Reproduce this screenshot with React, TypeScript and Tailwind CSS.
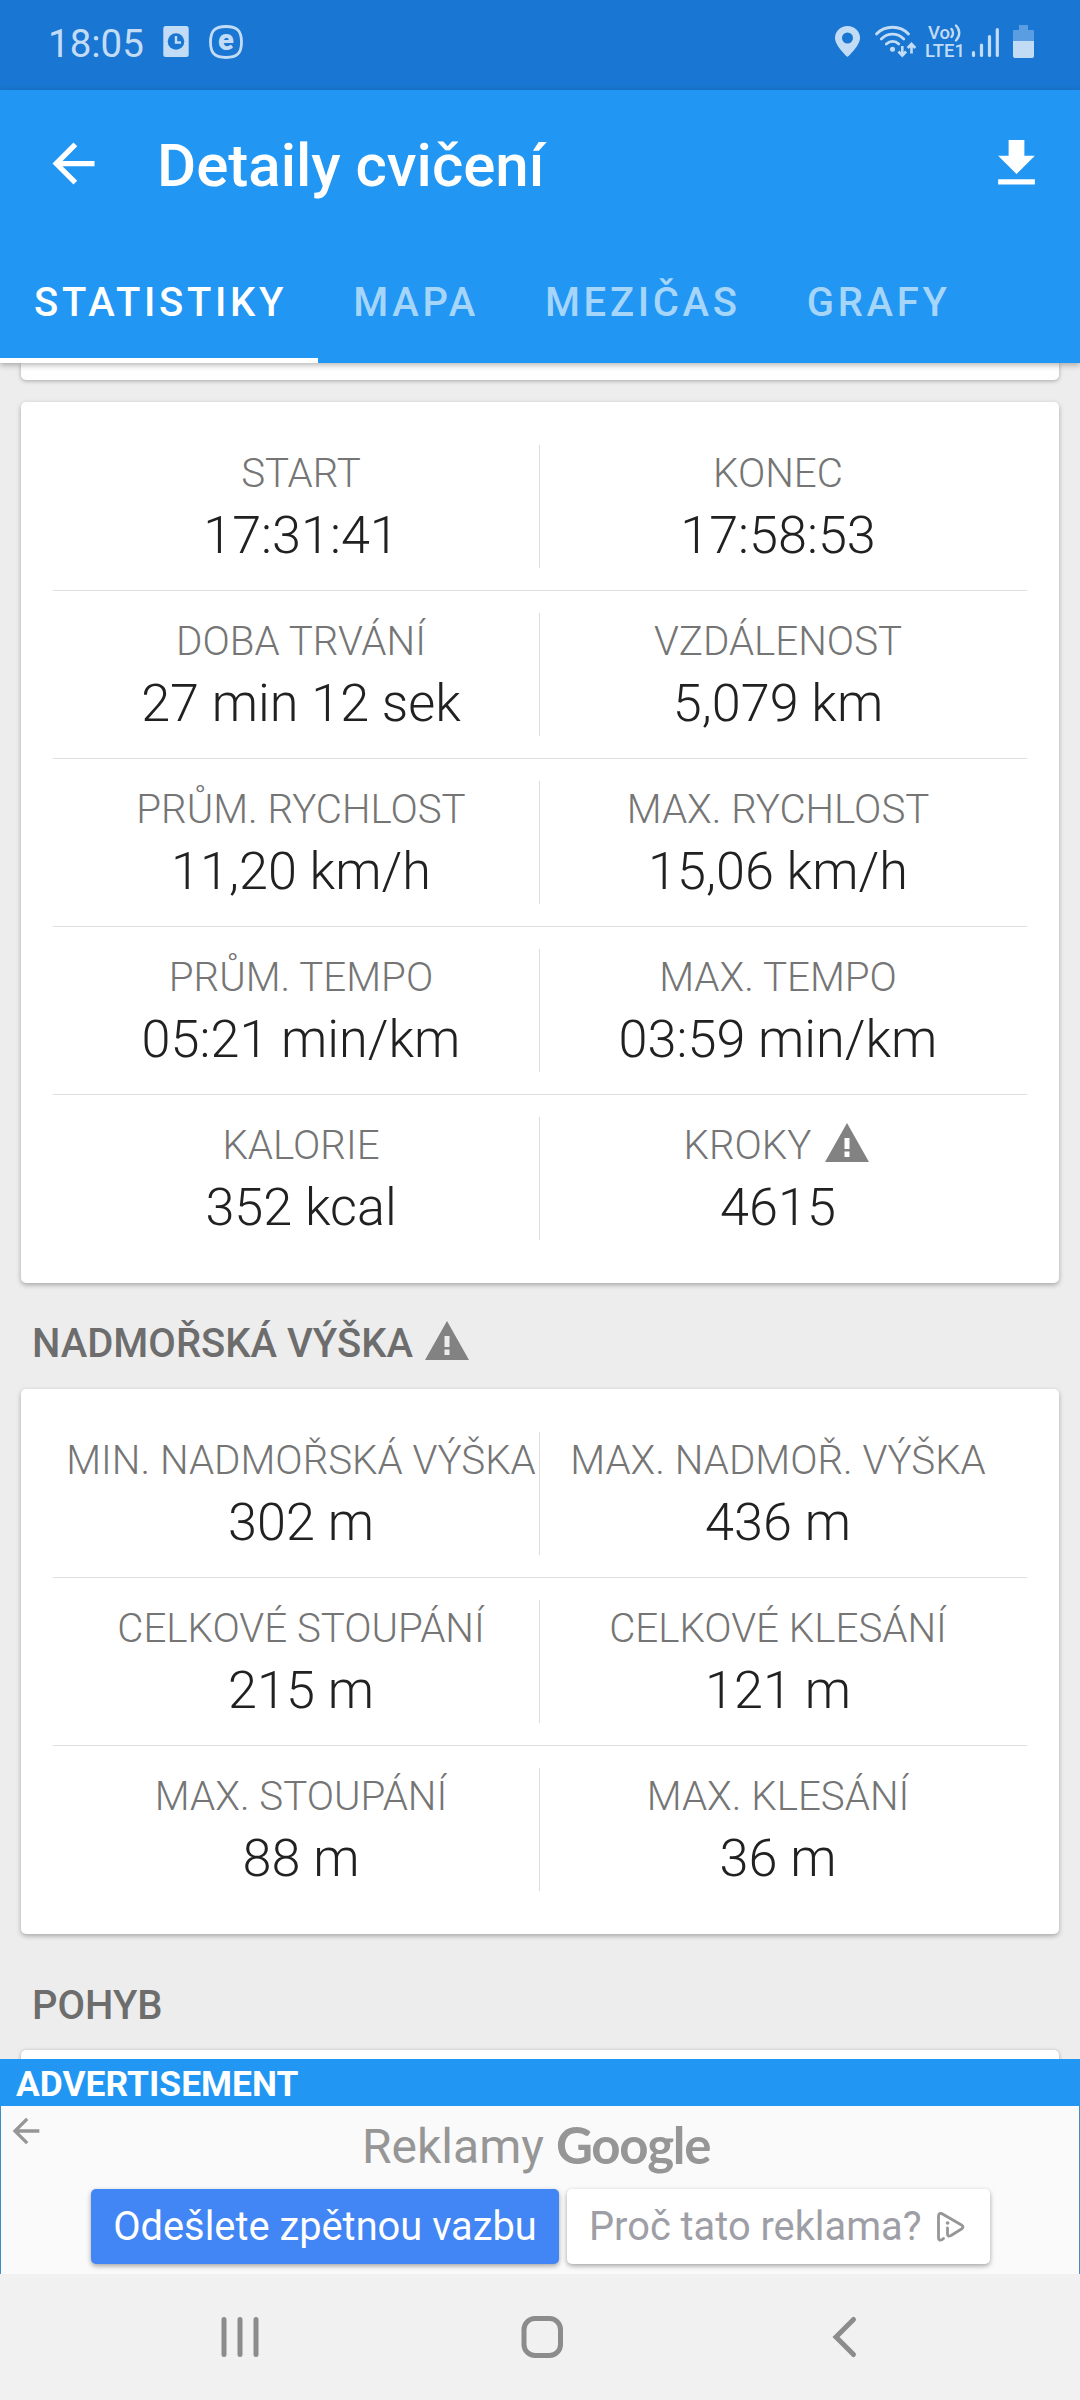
import { MdArrowBack, MdFileDownload } from "react-icons/md";

interface Stat {
  label: string;
  value: string;
  warning?: boolean;
}

interface StatCardProps {
  rows: Stat[][];
}

const tabs = ["STATISTIKY", "MAPA", "MEZIČAS", "GRAFY"];

const mainStats: Stat[][] = [
  [
    { label: "START", value: "17:31:41" },
    { label: "KONEC", value: "17:58:53" },
  ],
  [
    { label: "DOBA TRVÁNÍ", value: "27 min 12 sek" },
    { label: "VZDÁLENOST", value: "5,079 km" },
  ],
  [
    { label: "PRŮM. RYCHLOST", value: "11,20 km/h" },
    { label: "MAX. RYCHLOST", value: "15,06 km/h" },
  ],
  [
    { label: "PRŮM. TEMPO", value: "05:21 min/km" },
    { label: "MAX. TEMPO", value: "03:59 min/km" },
  ],
  [
    { label: "KALORIE", value: "352 kcal" },
    { label: "KROKY", value: "4615", warning: true },
  ],
];

const altitudeStats: Stat[][] = [
  [
    { label: "MIN. NADMOŘSKÁ VÝŠKA", value: "302 m" },
    { label: "MAX. NADMOŘ. VÝŠKA", value: "436 m" },
  ],
  [
    { label: "CELKOVÉ STOUPÁNÍ", value: "215 m" },
    { label: "CELKOVÉ KLESÁNÍ", value: "121 m" },
  ],
  [
    { label: "MAX. STOUPÁNÍ", value: "88 m" },
    { label: "MAX. KLESÁNÍ", value: "36 m" },
  ],
];

const WarningIcon = () => (
  <svg width="44" height="39" viewBox="0 0 44 39" className="shrink-0 mb-2 mr-[3px]">
    <path
      fill="#828282"
      fillRule="evenodd"
      d="M22 0 44 39H0ZM19.5 15v11h5V15ZM19.5 28.5v5.5h5v-5.5Z"
    />
  </svg>
);

const StatusBar = () => (
  <div className="h-[90px] shrink-0 bg-[#1976d2] text-[#c3dcf5] flex items-center justify-between pl-12 pr-[46px] pb-1.5">
    <div className="flex items-center">
      <span className="text-[38.500px] w-[115px] pt-[3px]">18:05</span>
      <svg width="82" height="36" viewBox="0 0 82 36" fill="none">
        <rect x="0.300" y="2" width="25.400" height="31" rx="2.500" fill="#c3dcf5" />
        <circle cx="13" cy="17.500" r="8.300" fill="#1976d2" />
        <path d="M13 12v6.500h5" stroke="#c3dcf5" strokeWidth="2.400" />
        <path
          d="M63 2.500c11 0 15.500 4 15.500 15.500S74 33.500 63 33.500 47.500 29.500 47.500 18 52 2.500 63 2.500Z"
          stroke="#c3dcf5"
          strokeWidth="2.800"
        />
        <text
          x="63"
          y="26"
          textAnchor="middle"
          fontSize="29"
          fontWeight="900"
          fill="#c3dcf5"
          className="font-['Roboto',sans-serif]"
        >
          e
        </text>
      </svg>
    </div>

    <div className="flex items-center h-9">
      {/* Location + wifi */}
      <svg width="90" height="36" viewBox="0 0 90 36" fill="none" stroke="#c3dcf5">
        <path
          fill="#c3dcf5"
          stroke="none"
          fillRule="evenodd"
          d="M12.500 2C5.500 2 0 7 0 14c0 8 12.500 19 12.500 19S25 22 25 14C25 7 19.500 2 12.500 2Zm0 6.500a5.500 5.500 0 1 1 0 11 5.500 5.500 0 0 1 0-11Z"
        />
        <path
          strokeWidth="2.800"
          strokeLinecap="round"
          d="M41.500 10C50 1 65 1 73.500 10M46.300 15c6.500-6.500 16-6.500 22.500 0M51.300 20c3.800-3.500 9-3.500 12.500 0"
        />
        <circle cx="57.500" cy="25.300" r="2.500" fill="#c3dcf5" stroke="none" />
        <path strokeWidth="2.600" d="M67.300 22v9.500M63.500 27.500l3.800 4 3.800-4M76.500 29.500V20M72.700 24l3.800-4 3.800 4" />
      </svg>
      <div className="w-[43px] text-[18.500px] font-medium leading-[18px] whitespace-nowrap">
        <div className="flex items-center pl-[3px]">
          Vo
          <svg width="12" height="18" viewBox="0 0 12 18" fill="none" stroke="#c3dcf5" strokeWidth="2.400" strokeLinecap="round">
            <path d="M1.500 5c2 2.200 2 5.800 0 8M6 1.500c4.300 4.500 4.300 10.500 0 15" />
          </svg>
        </div>
        <div>LTE1</div>
      </div>
      <svg width="66" height="36" viewBox="0 0 66 36" fill="none" stroke="#c3dcf5">
        <path strokeWidth="3.200" strokeLinecap="round" d="M5.500 28.500v3M13.500 21v10.500M21.500 12.500v19M29.300 5.500v26" />
        <path stroke="none" fill="#5a9de0" d="M51 1h9v5h5a1 1 0 0 1 1 1v10H45V7a1 1 0 0 1 1-1h5Z" />
        <path stroke="none" fill="#c3dcf5" d="M45 17h21v15a2 2 0 0 1-2 2H47a2 2 0 0 1-2-2Z" />
      </svg>
    </div>
  </div>
);

const StatCard = ({ rows }: StatCardProps) => (
  <div className="mx-[21px] px-8 py-[43px] bg-white rounded-[5px] shadow-[0_2px_5px_rgba(0,0,0,0.3)]">
    {rows.map((row, index) => (
      <div key={row[0].label}>
        {index > 0 && <div className="h-px my-[22px] bg-[#dfdfdf]" />}
        <div className="flex h-[123px] px-2.5 text-center">
          {row.map((stat, i) => (
            <div
              key={stat.label}
              className={`w-[477px] shrink-0 whitespace-nowrap ${i === 0 ? "border-r border-[#dfdfdf]" : "pr-px"}`}
            >
              <div className="flex items-center justify-center gap-3.5 h-[47px] mt-1.5 text-[40.300px] font-light text-[#757575]">
                {stat.label}
                {stat.warning && <WarningIcon />}
              </div>
              <div className="h-[61px] leading-[61px] mt-[7px] text-[52.200px] font-light text-[#212121]">
                {stat.value}
              </div>
            </div>
          ))}
        </div>
      </div>
    ))}
  </div>
);

const App = () => {
  return (
    <div className="w-[1080px] h-[2400px] overflow-hidden flex flex-col bg-[#ededed] font-['Roboto',sans-serif]">
      <StatusBar />

      {/* App bar */}
      <div className="relative z-10 h-[273px] shrink-0 bg-[#2196f3] text-white shadow-[0_2px_6px_rgba(0,0,0,0.3)]">
        <div className="flex items-center h-[147px] pl-[42px] pr-8">
          <MdArrowBack size={63} />
          <h1 className="grow pl-[52px] pt-1 text-[60px] font-medium">Detaily cvičení</h1>
          <MdFileDownload size={63} />
        </div>
        <div className="flex h-[126px] text-[40px] font-medium tracking-[3.700px]">
          {tabs.map((tab, index) => (
            <div
              key={tab}
              className={`relative flex items-center pl-[34px] pr-8 pt-1.5 ${index === 0 ? "" : "text-[#a6d5fa]"}`}
            >
              {tab}
              {index === 0 && <span className="absolute left-0 right-px bottom-0 h-[5px] bg-white" />}
            </div>
          ))}
        </div>
      </div>

      {/* Scrolled content */}
      <div className="h-[1696px] shrink-0 overflow-hidden">
        <div className="h-[17px] mx-[21px] bg-white rounded-b-[5px] shadow-[0_1px_4px_rgba(0,0,0,0.3)]" />
        <div className="h-[22px]" />
        <StatCard rows={mainStats} />
        <div className="flex items-center gap-3 h-[106px] pl-8 pt-4 text-[40px] font-medium text-[#6d6d6d]">
          NADMOŘSKÁ VÝŠKA
          <WarningIcon />
        </div>
        <StatCard rows={altitudeStats} />
        <div className="flex items-center h-[116px] pl-8 pt-7 text-[40px] font-medium text-[#6d6d6d]">
          POHYB
        </div>
        <div className="h-20 mx-[21px] bg-white rounded-[5px] shadow-[0_1px_4px_rgba(0,0,0,0.3)]" />
      </div>

      {/* Ad banner */}
      <div className="h-[47px] shrink-0 pl-4 bg-[#2196f3] text-white text-[35.400px] leading-[50px] font-bold">
        ADVERTISEMENT
      </div>
      <div className="relative h-[168px] shrink-0 bg-[#fafafa] border-x border-[#3c8fc8]">
        <MdArrowBack size={40} className="absolute left-[5px] top-[5px] text-[#969696]" />
        <div className="flex h-[83px] pl-[361px] text-[#969696] text-[48px] leading-[81px]">
          Reklamy
          <span className="ml-3 font-['Lato',sans-serif] text-[51px] leading-[78px] font-bold tracking-[-1.300px]">
            Google
          </span>
        </div>
        <div className="flex gap-2 pl-[90px] text-[39.800px] whitespace-nowrap">
          <button className="w-[468px] h-[75px] rounded-[5px] bg-[#4285f4] text-white shadow-[0_2px_5px_rgba(0,0,0,0.35)]">
            Odešlete zpětnou vazbu
          </button>
          <button className="w-[423px] h-[75px] pl-[22px] flex items-center gap-[15px] rounded-[5px] bg-white text-[#9e9ea6] shadow-[0_2px_5px_rgba(0,0,0,0.35)]">
            Proč tato reklama?
            <svg width="28" height="30" viewBox="0 0 28 30" fill="none" stroke="#969696" strokeWidth="2.800" strokeLinecap="round" strokeLinejoin="round">
              <path d="M6.500 26.500c-2.500 2.500-5 2-5-1V4.500c0-3 1.500-4 4-2.500l19 11c2 1.200 2 2.800 0 4L14 23.500c-2.500 1.200-3.500.5-3.500-1.500v-6" />
              <path d="M10.500 11h.2" strokeWidth="3.500" />
            </svg>
          </button>
        </div>
      </div>

      {/* Navigation bar */}
      <div className="h-[126px] shrink-0 bg-[#f1f1f1] flex items-center">
        <svg width="1080" height="126" viewBox="0 0 1080 126" fill="none" stroke="#8c8c8c" strokeWidth="5" strokeLinecap="round">
          <path d="M224 45.500v35M240 45.500v35M256 45.500v35" />
          <rect x="524" y="44.500" width="36.500" height="37" rx="11" />
          <path d="M853.500 45.500 836 63l17.500 17.500" />
        </svg>
      </div>
    </div>
  );
};

export default App;
